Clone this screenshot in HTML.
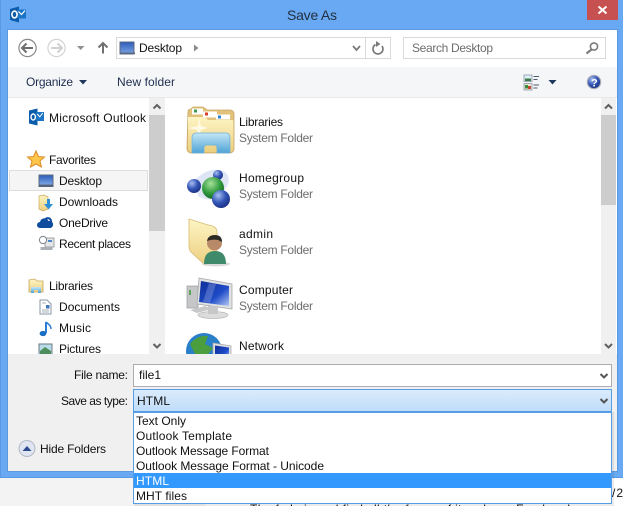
<!DOCTYPE html>
<html><head><meta charset="utf-8"><style>
html,body{margin:0;padding:0;width:623px;height:506px;overflow:hidden;background:#fff}
svg{display:block}
text{font-family:"Liberation Sans",sans-serif;font-size:12px;fill:#111}
.n{fill:#1e2f50}
.g{fill:#6d6d6d}
</style></head><body>
<svg width="623" height="506" viewBox="0 0 623 506" xmlns="http://www.w3.org/2000/svg">
<defs>
<linearGradient id="fo" x1="0" y1="0" x2="0" y2="1"><stop offset="0" stop-color="#fdf5c4"/><stop offset="1" stop-color="#eccf80"/></linearGradient>
<linearGradient id="li" x1="0" y1="0" x2="0" y2="1"><stop offset="0" stop-color="#c4e6f5"/><stop offset="1" stop-color="#4fa3d6"/></linearGradient>
<linearGradient id="sc" x1="0" y1="0" x2="1" y2="1"><stop offset="0" stop-color="#0f2c96"/><stop offset=".6" stop-color="#1f4cc8"/><stop offset="1" stop-color="#b4c8f4"/></linearGradient>
<linearGradient id="dk" x1="0" y1="0" x2="0" y2="1"><stop offset="0" stop-color="#2c5bb8"/><stop offset="1" stop-color="#7da6e6"/></linearGradient>
<linearGradient id="cb" x1="0" y1="0" x2="0" y2="1"><stop offset="0" stop-color="#dcecfc"/><stop offset="1" stop-color="#bedcf8"/></linearGradient>
<radialGradient id="bb" cx=".35" cy=".3" r=".8"><stop offset="0" stop-color="#a9c0f0"/><stop offset=".5" stop-color="#3557b8"/><stop offset="1" stop-color="#16297a"/></radialGradient>
<radialGradient id="gb" cx=".4" cy=".3" r=".8"><stop offset="0" stop-color="#a5e09a"/><stop offset=".55" stop-color="#2f9a3c"/><stop offset="1" stop-color="#0f5a22"/></radialGradient>
<clipPath id="nav"><rect x="8" y="98" width="141" height="256"/></clipPath>
<clipPath id="main"><rect x="166" y="98" width="435" height="256"/></clipPath>
<clipPath id="bot"><rect x="0" y="478" width="623" height="28"/></clipPath>
</defs>

<!-- below-window page -->
<rect x="0" y="478" width="623" height="28" fill="#f3f3f3"/>
<rect x="205" y="478" width="418" height="28" fill="#fff"/>
<g clip-path="url(#bot)"><text x="612" y="497" textLength="11">/2</text>
<text x="250" y="513" textLength="320">The fade in and find all the forms of it on here. Freehand</text></g>

<!-- window frame -->
<rect x="0" y="0" width="623" height="478" fill="#69a9f3"/>
<rect x="0" y="0" width="1" height="478" fill="#5a9ae4"/>
<rect x="0" y="477" width="623" height="1" fill="#5a9ae4"/>
<rect x="8" y="30" width="609" height="441" fill="#fff"/>
<rect x="7.5" y="29.5" width="610" height="442" fill="none" stroke="#5b98de"/>

<!-- title bar -->
<path d="M10 9 L19 6.5 V22.5 L10 20 Z" fill="#0b5cab"/>
<rect x="17" y="9.5" width="9" height="9" fill="#1b74c5"/>
<path d="M18.5 11.5 L21.5 14.5 L25 10.5" fill="none" stroke="#fff" stroke-width="1.2"/>
<ellipse cx="14.5" cy="14.5" rx="2.6" ry="3.4" fill="none" stroke="#fff" stroke-width="1.6"/>
<text x="287" y="20" textLength="50" style="font-size:14px;fill:#22303f">Save As</text>
<rect x="587" y="0" width="31" height="20" fill="#c75050"/>
<path d="M598.5 6.5 L606.5 13.5 M606.5 6.5 L598.5 13.5" stroke="#fff" stroke-width="2"/>

<!-- nav row -->
<circle cx="27.5" cy="48" r="8.6" fill="#fff" stroke="#8a8a8a" stroke-width="1.2"/>
<path d="M22 48 H33 M26.5 43.5 L22 48 L26.5 52.5" fill="none" stroke="#6e6e6e" stroke-width="2"/>
<circle cx="56.5" cy="48" r="8.6" fill="#fff" stroke="#d4d4d4" stroke-width="1.2"/>
<path d="M51 48 H62 M57.5 43.5 L62 48 L57.5 52.5" fill="none" stroke="#d0d0d0" stroke-width="2"/>
<path d="M77 46 H84.5 L80.7 50 Z" fill="#909090"/>
<path d="M103 53.5 V43 M98.5 47.5 L103 43 L107.5 47.5" fill="none" stroke="#6f6f6f" stroke-width="2"/>

<rect x="116.5" y="37.5" width="274" height="21" fill="#fff" stroke="#d9d9d9"/>
<rect x="365" y="38" width="1" height="20" fill="#d9d9d9"/>
<rect x="120" y="42" width="14" height="12" fill="url(#dk)" stroke="#5c6a80"/>
<rect x="120" y="52.5" width="15" height="1.5" fill="#5c6a80"/>
<text x="139" y="52" textLength="43">Desktop</text>
<path d="M194 44.5 L198.5 48 L194 51.5 Z" fill="#8a8a8a"/>
<path d="M353 46 L356.5 50 L360 46" fill="none" stroke="#7a7a7a" stroke-width="1.8"/>
<path d="M382 46 A5 5 0 1 1 375.5 44.6" fill="none" stroke="#7a7a7a" stroke-width="1.7"/>
<path d="M377 41 V47 L381.5 44 Z" fill="#7a7a7a" transform="translate(-1 0)"/>

<rect x="403.5" y="37.5" width="202" height="21" fill="#fff" stroke="#d9d9d9"/>
<text x="412" y="52" textLength="81" class="g">Search Desktop</text>
<circle cx="594" cy="46.5" r="3.6" fill="none" stroke="#7c7c7c" stroke-width="1.6"/>
<path d="M591.5 49.5 L586.5 53.5" stroke="#7c7c7c" stroke-width="2.2"/>

<!-- command bar -->
<rect x="8" y="67" width="609" height="30" fill="#f5f6f7"/>
<rect x="8" y="97" width="609" height="1" fill="#e8e9ea"/>
<text x="26" y="86" textLength="47" class="n">Organize</text>
<path d="M79 80 H87 L83 84.5 Z" fill="#1e395b"/>
<text x="117" y="86" textLength="58" class="n">New folder</text>
<!-- view icon -->
<rect x="524" y="75" width="8" height="6.5" fill="#dff0f5" stroke="#8b98a8" stroke-width=".8"/>
<rect x="525" y="78.5" width="6" height="2.5" fill="#3c7a4a"/>
<rect x="524" y="83.5" width="8" height="6.5" fill="#efe6d6" stroke="#8b98a8" stroke-width=".8"/>
<rect x="525" y="85" width="3" height="3.5" fill="#3b8d3c"/><rect x="528" y="86" width="3" height="3" fill="#c4452e"/>
<path d="M533.5 76.5 H539 M533.5 79.5 H537.5 M533.5 85 H539 M533.5 88 H537.5" stroke="#4d5b6e" stroke-width="1"/>
<path d="M548.5 80 H556.5 L552.5 84.5 Z" fill="#1e395b"/>
<circle cx="594" cy="82" r="6.7" fill="url(#bb)" stroke="#a9afb8" stroke-width="1.2"/>
<text x="591" y="86.5" textLength="6" style="font-size:11px;font-weight:bold;fill:#fff">?</text>

<!-- content white -->
<rect x="8" y="98" width="609" height="256" fill="#fff"/>

<!-- nav pane -->
<g clip-path="url(#nav)">
<path d="M29 110.5 L37.5 108.5 V125.5 L29 123.5 Z" fill="#0b5cab"/>
<rect x="36" y="112" width="8" height="9" fill="#1b74c5"/>
<path d="M37.2 114 L39.8 116.8 L42.8 113" fill="none" stroke="#fff" stroke-width="1"/>
<ellipse cx="33.2" cy="117" rx="2.2" ry="3" fill="none" stroke="#fff" stroke-width="1.4"/>
<text x="49" y="122" textLength="97">Microsoft Outlook</text>

<path d="M36 151 L38.5 156.5 L44.5 157 L40 161 L41.5 167 L36 164 L30.5 167 L32 161 L27.5 157 L33.5 156.5 Z" fill="#fbc64a" stroke="#df8c2c" stroke-width="1"/>
<text x="49" y="164" textLength="47">Favorites</text>

<rect x="9.5" y="170.5" width="138" height="20" fill="#f5f5f5" stroke="#dedede"/>
<rect x="39" y="175" width="14" height="10" fill="url(#dk)" stroke="#5c6a80"/>
<rect x="38.5" y="185" width="15" height="2" fill="#55627a"/>
<text x="59" y="185" textLength="43">Desktop</text>

<path d="M39 196 L44 195 L48 197 V209 L43 211 L39 209 Z" fill="url(#fo)" stroke="#c9a85c" stroke-width=".7"/>
<path d="M47 199 H50 V204 H53 L48.5 209.5 L44 204 H47 Z" fill="#2e8fd9"/>
<text x="59" y="206" textLength="59">Downloads</text>

<path d="M40 228 A3 3 0 0 1 40 222 A4.5 4.5 0 0 1 48.5 221 A3.6 3.6 0 0 1 50.5 228 Z" fill="#0f4c9e"/>
<path d="M44.5 220.5 A3 3 0 0 1 51 222.5" fill="none" stroke="#0f4c9e" stroke-width="2"/>
<text x="59" y="227" textLength="49">OneDrive</text>

<rect x="45" y="238" width="9" height="9" fill="#e6e6e6" stroke="#8a8f96" stroke-width=".8"/>
<circle cx="43" cy="240" r="3.6" fill="#fff" stroke="#79818a"/>
<rect x="40.5" y="247" width="12" height="3" fill="#aab0b6"/>
<rect x="48" y="240" width="4" height="2" fill="#4d86c9"/>
<text x="59" y="248" textLength="72">Recent places</text>

<path d="M29 280 L35 279 L37 281 H43 V292 H29 Z" fill="url(#fo)" stroke="#c9a85c" stroke-width=".8"/>
<path d="M31 287 H41 V293 H38 V290 H34 V293 H31 Z" fill="url(#li)"/>
<text x="49" y="290" textLength="44">Libraries</text>

<path d="M40 300 H47 L51 304 V314 H40 Z" fill="#fff" stroke="#8a96a5"/>
<path d="M42 303 H46 M42 310 H49 M42 312 H49" stroke="#8a96a5" stroke-width=".8"/>
<rect x="46" y="305" width="3.5" height="3.5" fill="#3f77b8"/>
<text x="59" y="311" textLength="61">Documents</text>

<path d="M46 322 V333" stroke="#2a7fd4" stroke-width="2"/>
<path d="M46 322 C48 324 51 325 51 329" fill="none" stroke="#2a7fd4" stroke-width="1.5"/>
<ellipse cx="43" cy="333.5" rx="3.4" ry="2.6" fill="#1c6ec4"/>
<text x="59" y="332" textLength="32">Music</text>

<rect x="39" y="344" width="13" height="11" fill="#b8dce8" stroke="#6b7a85"/>
<path d="M40 351 L45 347 L51 351 V354 H40 Z" fill="#4f8f5d"/>
<text x="59" y="353" textLength="42">Pictures</text>
</g>

<!-- left scrollbar -->
<rect x="149" y="98" width="16" height="256" fill="#f0f0f0"/>
<rect x="149" y="115" width="16" height="116" fill="#cdcdcd"/>
<path d="M153.5 108.5 L157 105 L160.5 108.5" fill="none" stroke="#606060" stroke-width="2"/>
<path d="M153.5 344 L157 347.5 L160.5 344" fill="none" stroke="#606060" stroke-width="2"/>

<!-- main list -->
<g clip-path="url(#main)">
<!-- Libraries icon -->
<path d="M188 112 Q188 109 191 109 L193 107 H203 L207 110 H229 Q234 110 234 114 V148 Q234 153 229 153 H192 Q187 153 187 148 Z" fill="#e2c27a" stroke="#c9a662" stroke-width=".8"/>
<rect x="192" y="108.5" width="11" height="6" fill="#fff"/><rect x="194" y="109.5" width="3" height="3" fill="#3d9a4c"/>
<rect x="203" y="111.5" width="14" height="6" fill="#fff"/><rect x="205" y="112.5" width="3" height="3" fill="#d8402a"/>
<rect x="216" y="114.5" width="14" height="5" fill="#fff"/><rect x="218" y="115.5" width="3" height="3" fill="#2d82cf"/>
<path d="M188 117 H205 L208 120 H232 Q233.500 120 233.500 122 V148 Q233.500 152 229 152 H192 Q188 152 188 148 Z" fill="url(#fo)"/>
<path d="M188 128 L198 126 L199 118 L201 126 L208 128 L201 130 L199 138 L197 130 Z" fill="#fffbe8" opacity=".9"/>
<path d="M197 133 H226 Q230 133 230 138 V153 H217 V148 Q217 145 214 145 H207 Q204 145 204 148 V153 H192 V138 Q192 133 197 133 Z" fill="url(#li)" stroke="#6bb0d8" stroke-width=".7"/>
<text x="239" y="126" textLength="44">Libraries</text>
<text x="239" y="142" textLength="74" class="g">System Folder</text>

<!-- Homegroup icon -->
<path d="M195 180 Q210 165 225 172 Q232 178 226 188 Q215 206 198 196 Z" fill="#d6e0f2" opacity=".8"/>
<circle cx="218" cy="175" r="5" fill="url(#bb)"/>
<circle cx="194" cy="186" r="7" fill="url(#bb)"/>
<circle cx="213" cy="188" r="11" fill="url(#gb)"/>
<circle cx="221" cy="199" r="9" fill="url(#bb)"/>
<text x="239" y="182" textLength="65">Homegroup</text>
<text x="239" y="198" textLength="74" class="g">System Folder</text>

<!-- admin icon -->
<path d="M189 219 L208 225 Q217 226 217 232 V258 L205 265 L191 252 Q189 250 189 246 Z" fill="url(#fo)" stroke="#d7bb72" stroke-width=".8"/>
<ellipse cx="216" cy="264" rx="14" ry="2.5" fill="#ccc" opacity=".7"/>
<path d="M204 264 Q204 251 215 251 Q226 251 226 264 Z" fill="#3f8a6a"/>
<circle cx="214.500" cy="243" r="7.500" fill="#b98a68"/>
<path d="M207 241 Q208 235 215 235 Q222 235 222 242 L218 240 Q212 239 207 241 Z" fill="#2d2a26"/>
<text x="239" y="238" textLength="34">admin</text>
<text x="239" y="254" textLength="74" class="g">System Folder</text>

<!-- Computer icon -->
<ellipse cx="213" cy="315" rx="15" ry="3.500" fill="#dcdcdc" stroke="#b8b8b8" stroke-width=".7"/>
<rect x="187" y="286" width="11" height="22" fill="#c4c6c8" stroke="#9a9c9e" stroke-width=".7"/>
<rect x="189" y="290" width="2" height="5" fill="#5aa858"/>
<path d="M190 310 L205 306 L212 309 L197 313 Z" fill="#c8c8c8"/>
<path d="M199 278 L232 284 V309 L197 304 Z" fill="#dfe0e2" stroke="#a8aaac" stroke-width=".8"/>
<path d="M201 281 L229 286 V306 L199 302 Z" fill="url(#sc)"/>
<path d="M209 283 L216 284 L210 303 L203 302 Z" fill="#fff" opacity=".2"/>
<rect x="208" y="306" width="10" height="8" fill="#c8c8c8"/>
<text x="239" y="294" textLength="54">Computer</text>
<text x="239" y="310" textLength="74" class="g">System Folder</text>

<!-- Network icon -->
<circle cx="204" cy="351" r="18" fill="#2a7fc9"/>
<path d="M190 344 Q197 335 208 336 L205 344 L213 348 L205 358 L195 354 Z" fill="#4a9e3d"/>
<path d="M213 343 L231 346 V362 L213 360 Z" fill="#dfe0e2" stroke="#a8aaac" stroke-width=".8"/>
<path d="M215 345.500 L229 347.500 V360 L215 358 Z" fill="url(#sc)"/>
<text x="239" y="350" textLength="45">Network</text>
</g>

<!-- right scrollbar -->
<rect x="601" y="98" width="15" height="256" fill="#f0f0f0"/>
<rect x="601" y="115" width="15" height="90" fill="#cdcdcd"/>
<path d="M605 108.500 L608.500 105 L612 108.500" fill="none" stroke="#606060" stroke-width="2"/>
<path d="M605 344 L608.500 347.500 L612 344" fill="none" stroke="#606060" stroke-width="2"/>

<!-- bottom panel -->
<rect x="8" y="354" width="609" height="117" fill="#f0f0f0"/>
<text x="74" y="379" textLength="54">File name:</text>
<text x="61" y="405" textLength="67">Save as type:</text>
<rect x="133.500" y="364.500" width="478" height="22" fill="#fff" stroke="#abadb3"/>
<text x="139" y="379" textLength="22">file1</text>
<path d="M600.500 374 L604 377.500 L607.500 374" fill="none" stroke="#555" stroke-width="2"/>
<rect x="133.500" y="389.500" width="478" height="22" fill="url(#cb)" stroke="#569de5"/>
<text x="137" y="405" textLength="33">HTML</text>
<path d="M600.500 399 L604 402.500 L607.500 399" fill="none" stroke="#555" stroke-width="2"/>

<circle cx="27" cy="448.500" r="8" fill="#dfe6f2" stroke="#b3bac6"/>
<path d="M22.500 451 H31.500 L27 446 Z" fill="#2c4a8c"/>
<text x="40" y="453" textLength="66">Hide Folders</text>

<!-- dropdown -->
<rect x="134" y="412" width="480" height="94" fill="#000" opacity=".08"/>
<rect x="133.500" y="411.500" width="478" height="92" fill="#fff" stroke="#569de5"/>
<rect x="134" y="411" width="477" height="2" fill="#569de5"/>
<rect x="134" y="473" width="477" height="15" fill="#3399ff"/>
<text x="136" y="425" textLength="50">Text Only</text>
<text x="136" y="440" textLength="96">Outlook Template</text>
<text x="136" y="455" textLength="133">Outlook Message Format</text>
<text x="136" y="470" textLength="188">Outlook Message Format - Unicode</text>
<text x="136" y="485" textLength="33" style="fill:#fff">HTML</text>
<text x="136" y="500" textLength="51">MHT files</text>
</svg>
</body></html>
